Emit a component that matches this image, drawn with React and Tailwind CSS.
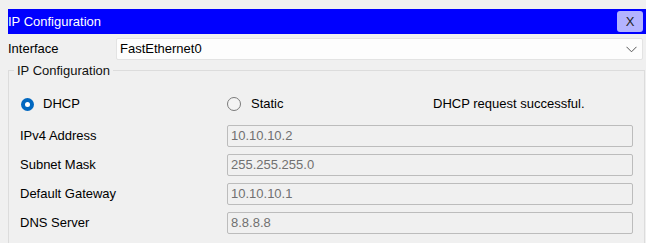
export default function App() {
  const rows = [
    ["IPv4 Address", "10.10.10.2"],
    ["Subnet Mask", "255.255.255.0"],
    ["Default Gateway", "10.10.10.1"],
    ["DNS Server", "8.8.8.8"],
  ];
  const font = { fontFamily: '"Liberation Sans", Arial, sans-serif' };
  return (
    <div
      className="w-[646px] h-[243px] bg-[#f0f0f0] overflow-hidden pt-[9px] pl-[8px] text-[13px] text-black"
      style={font}
    >
      <div className="h-[25px] bg-[#0000ff] flex items-center justify-between pr-[3px]">
        <span className="text-white text-[13px] leading-none">IP Configuration</span>
        <div className="w-[26px] h-[21px] rounded-[3px] bg-[#b3b3ff] flex items-center justify-center text-[13px] text-[#222]">
          X
        </div>
      </div>
      <div className="mt-[4px] flex items-center h-[22px]">
        <div className="w-[108px]">Interface</div>
        <div className="w-[527px] h-[22px] bg-[#fdfdfd] border border-[#e3e3e3] rounded-[2px] flex items-center justify-between pl-[3px] pr-[5px]">
          <span>FastEthernet0</span>
          <svg width="11" height="7" viewBox="0 0 11 7">
            <path d="M0.5 0.8 L5.5 5.8 L10.5 0.8" fill="none" stroke="#555" strokeWidth="1" />
          </svg>
        </div>
      </div>
      <fieldset className="mt-[3px] w-[637px] h-[200px] border border-[#dcdcdc] pl-[11px]">
        <legend className="ml-[-6px] px-[3px] leading-[15px] text-[#111]">IP Configuration</legend>
        <div className="mt-[15px] flex items-center h-[22px]">
          <div className="w-[207px] flex items-center">
            <div className="w-[13px] h-[13px] rounded-full bg-[#0067c0] flex items-center justify-center ml-[1px]">
              <div className="w-[5px] h-[5px] rounded-full bg-white" />
            </div>
            <span className="ml-[9px]">DHCP</span>
          </div>
          <div className="w-[206px] flex items-center">
            <div className="w-[14px] h-[14px] rounded-full border border-[#7a7a7a] bg-[#f4f4f4]" />
            <span className="ml-[10px]">Static</span>
          </div>
          <span>DHCP request successful.</span>
        </div>
        <div className="mt-[10px] flex flex-col gap-[7px]">
          {rows.map(([label, value]) => (
            <div key={label} className="flex items-center h-[22px]">
              <div className="w-[207px]">{label}</div>
              <div className="w-[406px] h-[22px] border border-[#bcbcbc] rounded-[2px] flex items-center pl-[3px] text-[#707070]">
                {value}
              </div>
            </div>
          ))}
        </div>
      </fieldset>
    </div>
  );
}
